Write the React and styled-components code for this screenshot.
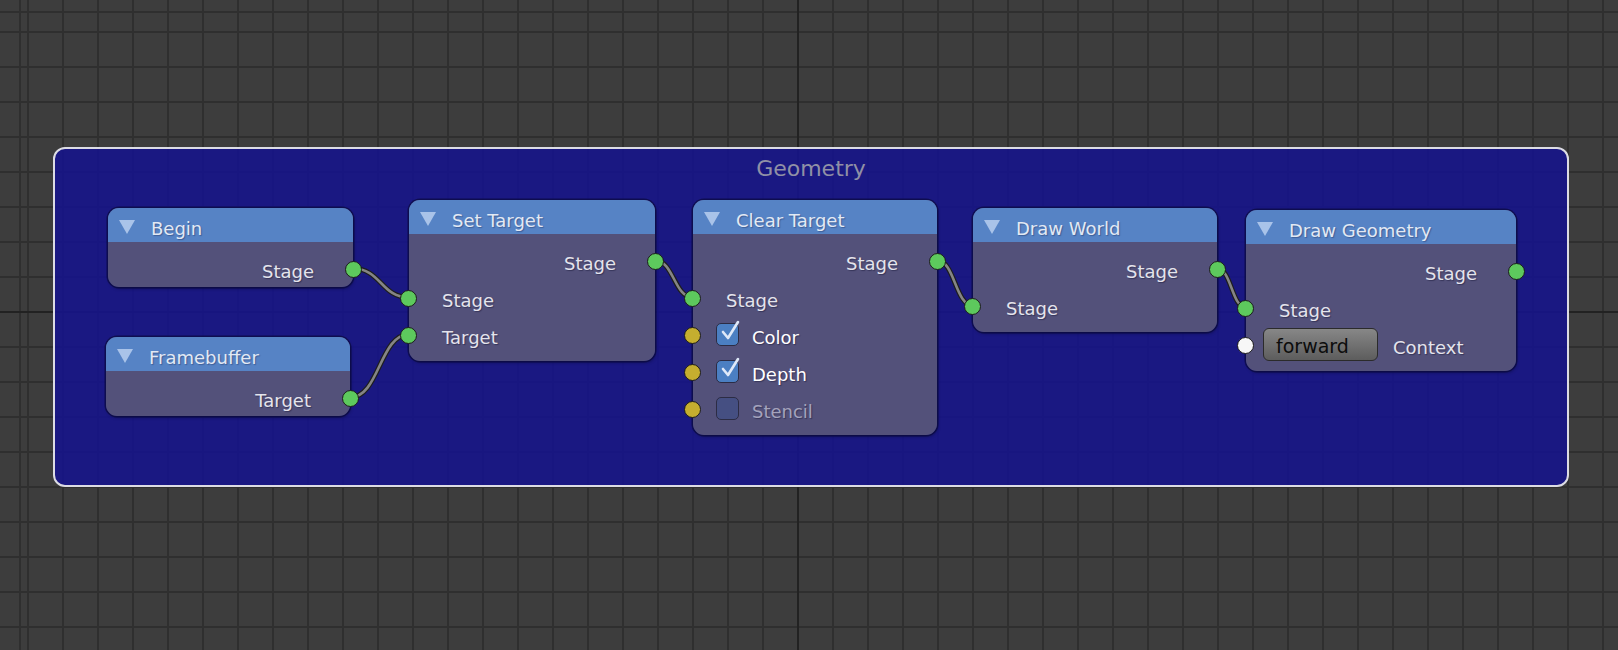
import React from "react";
import styled, { createGlobalStyle } from "styled-components";

const GlobalStyle = createGlobalStyle`
    html, body {
        margin: 0;
        padding: 0;
        background: #3d3d3d;
        font-family: "DejaVu Sans", "Liberation Sans", sans-serif;
    }
`;

const HEADER = 34;
const PAD = 8;
const ROW = 37;

// node graph data, coordinates are the place of each node on the canvas
const nodes = [
    { id: "begin", title: "Begin", x: 108, y: 208, w: 245,
        rows: [{ out: true, label: "Stage" }] },
    { id: "fb", title: "Framebuffer", x: 106, y: 337, w: 244,
        rows: [{ out: true, label: "Target" }] },
    { id: "set", title: "Set Target", x: 409, y: 200, w: 246,
        rows: [
            { out: true, label: "Stage" },
            { label: "Stage" },
            { label: "Target" },
        ] },
    { id: "clear", title: "Clear Target", x: 693, y: 200, w: 244,
        rows: [
            { out: true, label: "Stage" },
            { label: "Stage" },
            { label: "Color", socket: "yellow", check: true },
            { label: "Depth", socket: "yellow", check: true },
            { label: "Stencil", socket: "yellow", check: false },
        ] },
    { id: "world", title: "Draw World", x: 973, y: 208, w: 244,
        rows: [
            { out: true, label: "Stage" },
            { label: "Stage" },
        ] },
    { id: "geom", title: "Draw Geometry", x: 1246, y: 210, w: 270,
        rows: [
            { out: true, label: "Stage" },
            { label: "Stage" },
            { label: "Context", socket: "white", value: "forward" },
        ] },
];

const links = [
    ["begin", 0, "set", 1],
    ["fb", 0, "set", 2],
    ["set", 0, "clear", 1],
    ["clear", 0, "world", 1],
    ["world", 0, "geom", 1],
];

const socketAt = (id, row, out) => {
    const n = nodes.find(nd => nd.id === id);
    return {
        x: out ? n.x + n.w : n.x,
        y: n.y + HEADER + PAD + ROW / 2 + ROW * row,
    };
};

const Canvas = styled.div`
    position: relative;
    width: 1618px;
    height: 650px;
    overflow: hidden;
    background-color: #3d3d3d;
    background-image:
        linear-gradient(90deg, transparent 797px, #222 797px, #222 799px, transparent 799px),
        linear-gradient(180deg, transparent 311px, #222 311px, #222 313px, transparent 313px),
        repeating-linear-gradient(90deg, #2f2f2f 0 2px, transparent 2px 35px),
        repeating-linear-gradient(180deg, #2f2f2f 0 2px, transparent 2px 35px);
    background-position: 0 0, 0 0, 27px 0, 0 31px;
`;

const Frame = styled.div`
    position: absolute;
    left: 53px;
    top: 147px;
    width: 1512px;
    height: 336px;
    border: 2px solid #dcdce4;
    border-radius: 12px;
    background: rgba(22, 20, 138, 0.9);
    display: flex;
    justify-content: center;
`;

const FrameTitle = styled.div`
    margin-top: 6px;
    font-size: 22px;
    color: #9090a6;
    height: 28px;
    line-height: 28px;
`;

const Wires = styled.svg`
    position: absolute;
    left: 0;
    top: 0;
    pointer-events: none;
`;

const Node = styled.div`
    position: absolute;
    left: ${p => p.$x}px;
    top: ${p => p.$y}px;
    width: ${p => p.$w}px;
    border-radius: 11px;
    background: rgba(86, 84, 122, 0.97);
    box-shadow: 0 0 0 1.5px rgba(10, 10, 60, 0.7), 1px 2px 3px rgba(0, 0, 30, 0.35);
    color: #e4e4ec;
    font-size: 18px;
`;

const Header = styled.div`
    height: ${HEADER}px;
    display: flex;
    align-items: center;
    background: #5683c5;
    border-radius: 11px 11px 0 0;
    padding-left: 11px;
    gap: 16px;
    color: #e2e9f4;
    text-shadow: 1px 1px 1px rgba(20, 30, 70, 0.35);
`;

const Title = styled.span`
    padding-top: 6px;
`;

const Arrow = styled.span`
    width: 0;
    height: 0;
    border-left: 8px solid transparent;
    border-right: 8px solid transparent;
    border-top: 14px solid #a9c3e9;
    margin-top: 3px;
`;

const Body = styled.div`
    padding: ${PAD}px 0 ${p => (p.$inputs ? PAD : 0)}px;
`;

const Row = styled.div`
    position: relative;
    height: ${ROW}px;
    display: flex;
    align-items: center;
    justify-content: ${p => (p.$out ? "flex-end" : "flex-start")};
    padding: ${p => (p.$out ? "0 39px 0 0" : `0 0 0 ${p.$indent}px`)};
    text-shadow: 1px 1px 1px rgba(20, 20, 50, 0.45);
`;

const Label = styled.span`
    padding-top: 5px;
    color: ${p => (p.$dim ? "#a4a3bc" : p.$bright ? "#ffffff" : "#e4e4ec")};
`;

const socketColors = {
    green: "#5dc95d",
    yellow: "#c5ae2f",
    white: "#f7f7f7",
};

const Socket = styled.span`
    position: absolute;
    top: 50%;
    ${p => (p.$out ? "right" : "left")}: -9px;
    width: 15px;
    height: 15px;
    margin-top: -8px;
    border-radius: 50%;
    border: 1.5px solid #1c1c1c;
    background: ${p => socketColors[p.$kind]};
`;

const CheckBox = styled.span`
    position: relative;
    width: 21px;
    height: 21px;
    margin-right: 13px;
    border-radius: 5px;
    border: 1.5px solid #2c2c44;
    background: ${p => (p.$on ? "#4b7fc2" : "#454f82")};
`;

const Tick = styled.svg`
    position: absolute;
    left: 3px;
    top: -6px;
`;

const ValueButton = styled.span`
    box-sizing: border-box;
    width: 115px;
    height: 33px;
    margin-right: 15px;
    padding: 3px 0 0 12px;
    display: flex;
    align-items: center;
    border-radius: 6px;
    border: 1.5px solid #2b2b2b;
    background: linear-gradient(#878787, #5d5d5d);
    color: #0c0c0c;
    font-size: 19px;
    text-shadow: none;
`;

const NodeRow = ({ row }) => {
    if (row.out) {
        return (
            <Row $out>
                <Label>{row.label}</Label>
                <Socket $out $kind="green" />
            </Row>
        );
    }
    const indent = row.check !== undefined ? 23 : row.value ? 17 : 33;
    return (
        <Row $indent={indent}>
            <Socket $kind={row.socket || "green"} />
            {row.check !== undefined && (
                <CheckBox $on={row.check}>
                    {row.check && (
                        <Tick width="22" height="26" viewBox="0 0 22 26">
                            <path d="M3 14 L8 20 L18 4" fill="none" stroke="#dfe9f8" strokeWidth="2.6" strokeLinecap="round" strokeLinejoin="round" />
                        </Tick>
                    )}
                </CheckBox>
            )}
            {row.value && <ValueButton>{row.value}</ValueButton>}
            <Label $dim={row.check === false} $bright={row.check === true}>{row.label}</Label>
        </Row>
    );
};

const App = () => {
    return (
        <Canvas>
            <GlobalStyle />
            <Frame>
                <FrameTitle>Geometry</FrameTitle>
            </Frame>
            <Wires width="1618" height="650">
                {links.map(([a, ar, b, br], i) => {
                    const s = socketAt(a, ar, true);
                    const e = socketAt(b, br, false);
                    const dx = (e.x - s.x) / 2;
                    const d = `M${s.x} ${s.y} C${s.x + dx} ${s.y} ${e.x - dx} ${e.y} ${e.x} ${e.y}`;
                    return (
                        <g key={i}>
                            <path d={d} fill="none" stroke="#1e1e1e" strokeWidth="5" />
                            <path d={d} fill="none" stroke="#858585" strokeWidth="2.6" />
                        </g>
                    );
                })}
            </Wires>
            {nodes.map(n => (
                <Node key={n.id} $x={n.x} $y={n.y} $w={n.w}>
                    <Header>
                        <Arrow />
                        <Title>{n.title}</Title>
                    </Header>
                    <Body $inputs={n.rows.some(r => !r.out)}>
                        {n.rows.map((r, i) => <NodeRow key={i} row={r} />)}
                    </Body>
                </Node>
            ))}
        </Canvas>
    );
};

export default App;
